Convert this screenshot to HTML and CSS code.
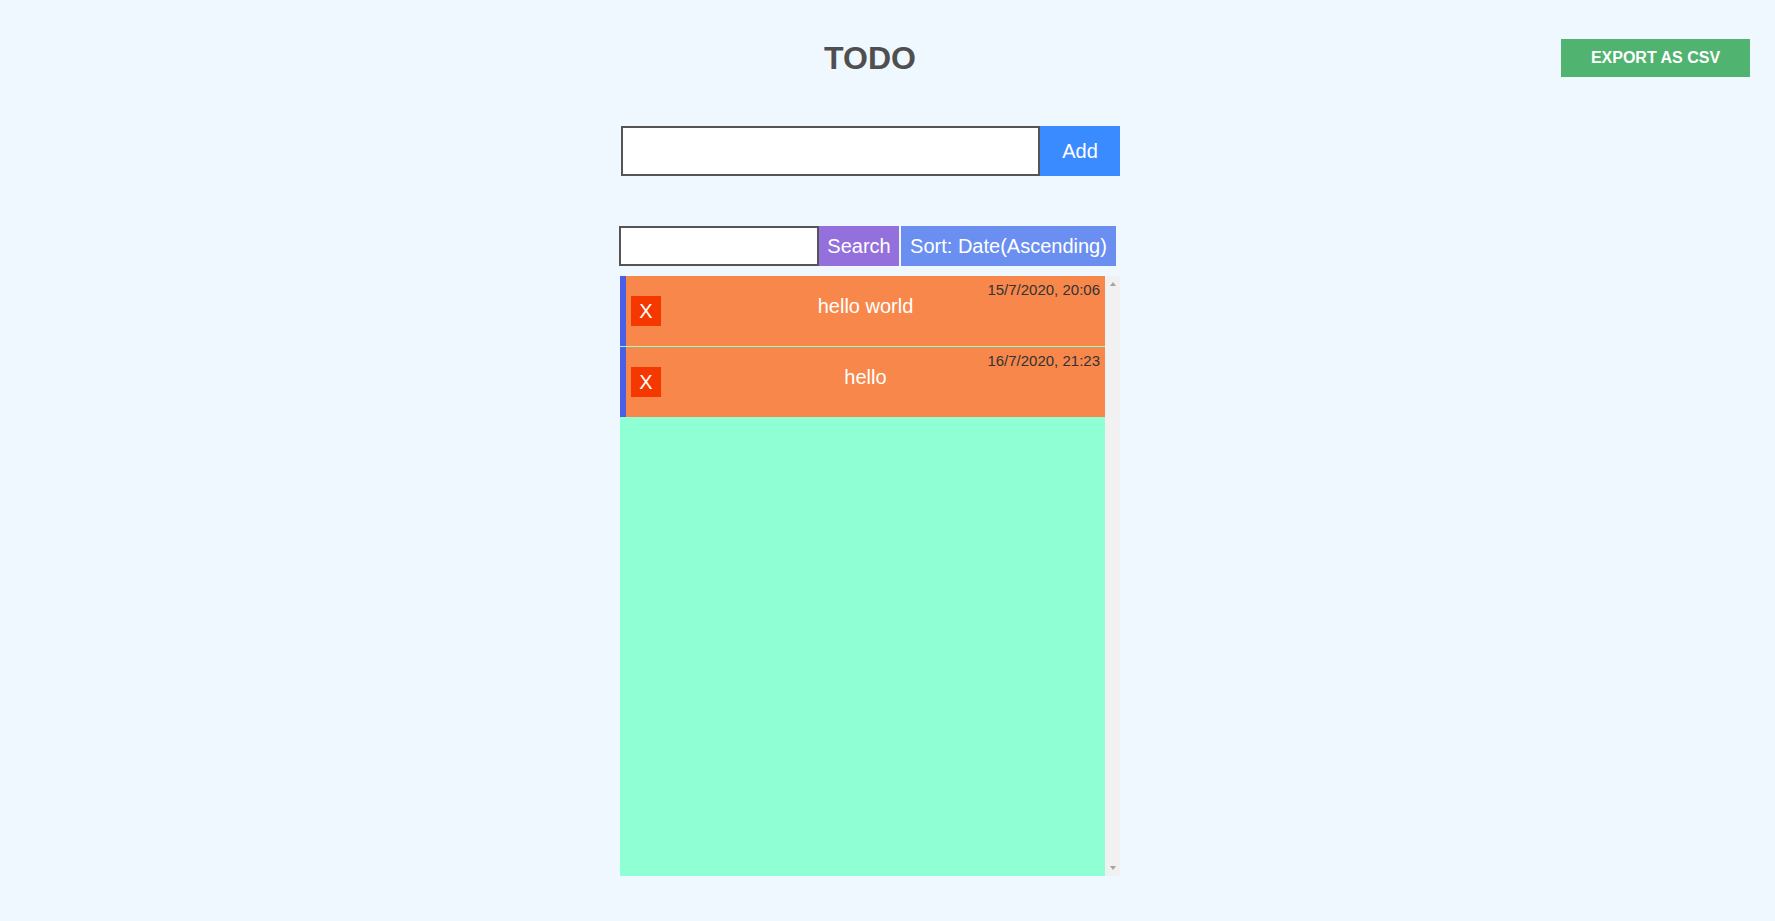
FILE: index.html
```html
<!DOCTYPE html>
<html lang="en">
<head>
<meta charset="utf-8">
<title>TODO</title>
<link rel="stylesheet" href="styles.css">
</head>
<body>
<div class="page">
  <div class="spacer"></div>
  <main class="column">
    <h1 class="title">TODO</h1>
    <form class="add-row">
      <input class="add-input" type="text">
      <button class="add-btn" type="button">Add</button>
    </form>
    <div class="search-row">
      <input class="search-input" type="text">
      <button class="search-btn" type="button">Search</button>
      <button class="sort-btn" type="button">Sort: Date(Ascending)</button>
    </div>
    <div class="list-box">
      <ul class="list">
        <li class="item">
          <button class="del-btn" type="button">X</button>
          <span class="item-date">15/7/2020, 20:06</span>
          <div class="item-text">hello world</div>
        </li>
        <li class="item">
          <button class="del-btn" type="button">X</button>
          <span class="item-date">16/7/2020, 21:23</span>
          <div class="item-text">hello</div>
        </li>
      </ul>
      <div class="scrollbar" aria-hidden="true">
        <span class="arrow arrow-up"></span>
        <span class="arrow arrow-down"></span>
      </div>
    </div>
  </main>
  <div class="side">
    <button class="export-btn" type="button">Export as CSV</button>
  </div>
</div>
</body>
</html>
```

FILE: styles.css
```css
* { box-sizing: border-box; }
html, body {
  margin: 0;
  padding: 0;
  background: #f0f8ff;
  font-family: "Liberation Sans", Arial, sans-serif;
  height: 100%;
}
.page {
  display: grid;
  grid-template-columns: 620px 500px 1fr;
  padding-top: 39px;
  min-height: 100%;
}
.column {
  display: flex;
  flex-direction: column;
}
.title {
  margin: 1px 0 0;
  font-size: 32px;
  font-weight: bold;
  color: #4f4f4f;
  text-align: center;
  line-height: 36px;
}
.add-row {
  display: flex;
  margin: 50px 0 0;
  padding-left: 1px;
  height: 50px;
}
.add-input {
  width: 419px;
  height: 50px;
  border: 2px solid #555;
  background: #fff;
  margin: 0;
  padding: 0 6px;
  font-size: 20px;
  font-family: inherit;
  outline: none;
}
.add-btn {
  width: 80px;
  height: 50px;
  border: none;
  margin: 0;
  background: #3a8bff;
  color: #fff;
  font-size: 20px;
  font-family: inherit;
  padding: 0;
}
.search-row {
  display: flex;
  margin-top: 50px;
  margin-left: -1px;
  height: 40px;
}
.search-input {
  width: 200px;
  height: 40px;
  border: 2px solid #555;
  background: #fff;
  margin: 0;
  padding: 0 4px;
  font-size: 18px;
  font-family: inherit;
  outline: none;
}
.search-btn,
.sort-btn {
  height: 40px;
  border: none;
  margin: 0;
  color: #fff;
  font-size: 20px;
  font-family: inherit;
  padding: 0;
}
.search-btn {
  width: 80px;
  background: #9370db;
}
.sort-btn {
  width: 215px;
  margin-left: 2px;
  background: #6a8ff0;
}
.list-box {
  display: flex;
  margin-top: 10px;
  height: 600px;
}
.list {
  flex: 1;
  list-style: none;
  margin: 0;
  padding: 0;
  overflow-y: auto;
  background: #8fffd4;
}
.scrollbar {
  width: 15px;
  background: #f1f1f1;
  display: flex;
  flex-direction: column;
  justify-content: space-between;
  align-items: center;
  padding: 6px 0 6px;
}
.arrow {
  width: 0;
  height: 0;
  border-left: 3.5px solid transparent;
  border-right: 3.5px solid transparent;
}
.arrow-up {
  border-bottom: 4px solid #a3a3a3;
}
.arrow-down {
  border-top: 4px solid #a3a3a3;
}
.item {
  position: relative;
  height: 70px;
  margin-bottom: 1px;
  background: #f7874b;
  border-left: 6px solid #4a5fe8;
}
.item-text {
  padding-top: 19px;
  text-align: center;
  font-size: 20px;
  color: #fff;
  line-height: 23px;
}
.item-date {
  position: absolute;
  top: 5px;
  right: 5px;
  font-size: 15px;
  line-height: 17px;
  color: #333;
}
.del-btn {
  position: absolute;
  left: 5px;
  top: 20px;
  width: 30px;
  height: 30px;
  border: none;
  margin: 0;
  padding: 0;
  background: #f53800;
  color: #fff;
  font-size: 20px;
  font-family: inherit;
  line-height: 30px;
}
.side {
  display: flex;
  justify-content: flex-end;
  align-items: flex-start;
  padding-right: 25px;
}
.export-btn {
  width: 189px;
  height: 38px;
  border: none;
  margin: 0;
  padding: 0;
  background: #50b36f;
  color: #fff;
  font-size: 16px;
  font-weight: bold;
  font-family: inherit;
  text-transform: uppercase;
}
```
